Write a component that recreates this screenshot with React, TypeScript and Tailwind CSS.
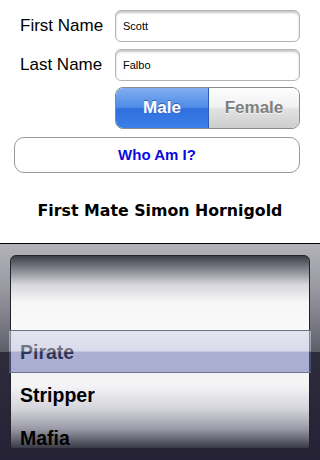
import React from "react";

const SANS = "font-['Liberation_Sans',Arial,sans-serif]";

function Field({ label, value }: { label: string; value: string }) {
    return (
        <div className="flex items-center h-[32px]">
            <span className={`w-[115px] shrink-0 whitespace-nowrap pl-[20px] text-[17px] text-black ${SANS}`}>{label}</span>
            <div className="w-[185px] shrink-0 h-[32px] flex items-center pl-[7px] bg-white border border-[#b4b4b4] rounded-[6px] shadow-[inset_0_2px_2px_rgba(0,0,0,0.22)]">
                <span className={`text-[11px] text-black ${SANS}`}>{value}</span>
            </div>
        </div>
    );
}

export default function App() {
    return (
        <div className="w-[320px] h-[460px] bg-white flex flex-col overflow-hidden">
            {/* Form */}
            <div className="h-[243px] shrink-0 flex flex-col pt-[10px]">
                <Field label="First Name" value="Scott" />
                <div className="h-[7px]" />
                <Field label="Last Name" value="Falbo" />

                {/* Segmented control */}
                <div className="flex ml-[115px] mt-[6px] w-[185px] h-[42px] rounded-[8px] overflow-hidden border border-[#8a8a8a]">
                    <div className="w-[93px] flex items-center justify-center bg-[linear-gradient(to_bottom,#82aef0_0%,#4f8be8_48%,#2f6fdd_52%,#3c7fe8_100%)] border-r border-[#2a5db5]">
                        <span className={`text-[17px] font-bold text-white ${SANS} [text-shadow:0_-1px_0_rgba(0,0,0,0.35)]`}>Male</span>
                    </div>
                    <div className="flex-1 flex items-center justify-center bg-[linear-gradient(to_bottom,#fdfdfd_0%,#f1f1f1_48%,#e3e3e3_52%,#cdcdcd_100%)]">
                        <span className={`text-[17px] font-bold text-[#7f7f7f] ${SANS} [text-shadow:0_1px_0_rgba(255,255,255,0.8)]`}>Female</span>
                    </div>
                </div>

                {/* Button */}
                <button className="mx-[14px] mt-[8px] w-[286px] h-[36px] rounded-[10px] border border-[#9a9a9a] bg-white flex items-center justify-center">
                    <span className={`text-[15px] font-bold text-[#0a0ae0] ${SANS}`}>Who Am I?</span>
                </button>

                <div className="mt-[25px] text-center">
                    <span className="text-[15.8px] font-bold text-black font-['DejaVu_Sans',Verdana,sans-serif]">
                        First Mate Simon Hornigold
                    </span>
                </div>
            </div>

            <div className="h-px shrink-0 bg-black" />

            {/* Picker */}
            <div className="relative flex-1 px-[10px] pt-[11px] bg-[linear-gradient(to_bottom,#b2b2b8_0%,#9a9aa3_20%,#74747f_40%,#5d5d6a_49.9%,#2e2c3c_50%,#242234_100%)]">
                <div className="h-[194px] rounded-t-[6px] rounded-b-[3px] border border-[#22222c] overflow-hidden pt-[75px] bg-[linear-gradient(to_bottom,#3e3e49_0%,#8e8e98_8%,#d6d6dc_15%,#f6f6f7_24%,#fafafa_40%,#f3f3f5_68%,#d2d2d9_80%,#9a9aa6_90%,#3a3a47_100%)]">
                    {["Pirate", "Stripper", "Mafia"].map((item) => (
                        <div key={item} className="h-[43px] flex items-center pl-[9px]">
                            <span className={`text-[19.5px] font-bold text-black ${SANS}`}>{item}</span>
                        </div>
                    ))}
                </div>

                {/* Selection bar */}
                <div className="absolute left-[9px] right-[9px] top-[86px] h-[43px] border-y border-[#6e7088] bg-[linear-gradient(to_bottom,rgba(212,213,230,0.58)_0%,rgba(195,198,222,0.58)_49%,rgba(95,105,172,0.5)_51%,rgba(95,105,172,0.5)_100%)]" />
            </div>
        </div>
    );
}
